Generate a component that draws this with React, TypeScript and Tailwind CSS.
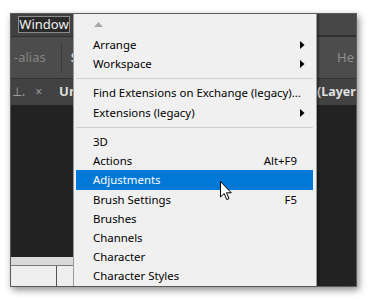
import React from "react";

const font = { fontFamily: '"Noto Sans", "Segoe UI", Arial, sans-serif' };

function SubArrow() {
  return (
    <svg width="5" height="8" viewBox="0 0 5 8" className="block">
      <path d="M0 0 L4.5 4 L0 8 Z" fill="#000" />
    </svg>
  );
}

type Item = { label: string; sub?: boolean; shortcut?: string; active?: boolean };

function Row({ item, h }: { item: Item; h: string }) {
  return (
    <div
      className={`${h} flex items-center pl-[17px] pr-[4px] ${
        item.active ? "bg-[#0078d7] text-white" : "text-[#000]"
      }`}
    >
      <span className="flex-1 whitespace-nowrap">{item.label}</span>
      {item.shortcut && <span className="mr-[12px] whitespace-nowrap">{item.shortcut}</span>}
      {item.sub && (
        <span className="mr-[4px]">
          <SubArrow />
        </span>
      )}
    </div>
  );
}

function Sep({ h }: { h: string }) {
  return (
    <div className={`${h} flex items-center`}>
      <div className="h-px w-full bg-[#cfcfcf]" />
    </div>
  );
}

function Cursor() {
  return (
    <svg width="13" height="20" viewBox="0 0 13 20" className="absolute left-[146px] top-[167px]">
      <path
        d="M0.5 0.5 L0.5 16 L4.2 12.6 L6.8 18.6 L9 17.6 L6.5 11.8 L11.3 11.8 Z"
        fill="#fff"
        stroke="#000"
        strokeWidth="1"
        strokeLinejoin="round"
      />
    </svg>
  );
}

export default function App() {
  return (
    <div className="w-[368px] h-[302px] bg-white pl-[10px] pt-[13px]" style={font}>
      <div className="relative w-[347px] h-[274px] flex flex-col bg-[#222] shadow-[2px_3px_7px_rgba(0,0,0,0.45)] border border-[#5a5a5a] overflow-hidden">
        {/* top bar */}
        <div className="h-[22px] bg-[#414141] flex items-start">
          <div className="ml-[7px] mt-[2px] h-[17px] w-[52px] bg-[#2a2a2a] border border-[#8c8c8c] text-[#f0f0f0] text-[13px] leading-[15px] flex items-center justify-center">
            Window
          </div>
          <div className="ml-auto w-[40px] h-full bg-[#474747] border-b border-[#333]" />
        </div>
        {/* toolbar */}
        <div className="h-[42px] bg-[#4c4c4c] border-t border-[#2f2f2f] flex items-center relative">
          <span className="ml-[3px] text-[#838383] text-[13px]">-alias</span>
          <div className="ml-[15px] w-px h-[30px] bg-[#3a3a3a]" />
          <span className="ml-[9px] text-[#cfcfcf] text-[13px] font-bold">S</span>
          <div className="ml-auto w-[40px] pl-[21px] whitespace-nowrap text-[#8e8e8e] text-[13px]">
            He
          </div>
        </div>
        {/* tab bar */}
        <div className="h-[27px] bg-[#424242] border-t border-[#333] flex items-center">
          <span className="ml-[1px] text-[#a8a8a8] text-[12px]">⊥.</span>
          <span className="ml-[10px] text-[#9c9c9c] text-[12px]">×</span>
          <span className="ml-[17px] text-[#dedede] text-[13px] font-bold">Un</span>
          <div className="ml-auto w-[40px] pl-[1px] overflow-hidden whitespace-nowrap text-[#e0e0e0] text-[12.5px] font-bold">
            (Layer
          </div>
        </div>
        {/* main */}
        <div className="flex-1 flex flex-row">
          <div className="w-[62px] flex flex-col">
            <div className="flex-1 bg-[#222]" />
            <div className="h-[8px] bg-[#d9d9d9]" />
            <div className="h-px bg-[#7a7a7a]" />
            <div className="h-[20px] bg-[#eeeeee] flex">
              <div className="ml-[45px] w-px bg-[#555]" />
            </div>
          </div>
          <div className="flex-1 bg-[#222]" />
        </div>

        {/* menu */}
        <div className="absolute left-[62px] top-0 w-[244px] bottom-0 bg-[#f0f0f0] border-l border-r border-[#9a9a9a] pl-[2px] pr-[3px] text-[11.4px] shadow-[2px_0_2px_rgba(0,0,0,0.35)]">
          <div className="h-[21px] flex items-center pl-[18px]">
            <svg width="9" height="5" viewBox="0 0 9 5">
              <path d="M0 5 L4.5 0 L9 5 Z" fill="#a8a8a8" />
            </svg>
          </div>
          <Row h="h-[19px]" item={{ label: "Arrange", sub: true }} />
          <Row h="h-[19px]" item={{ label: "Workspace", sub: true }} />
          <Sep h="h-[10px]" />
          <Row h="h-[20px]" item={{ label: "Find Extensions on Exchange (legacy)..." }} />
          <Row h="h-[20px]" item={{ label: "Extensions (legacy)", sub: true }} />
          <Sep h="h-[9px]" />
          <Row h="h-[19.2px]" item={{ label: "3D" }} />
          <Row h="h-[19.2px]" item={{ label: "Actions", shortcut: "Alt+F9" }} />
          <Row h="h-[19.2px]" item={{ label: "Adjustments", active: true }} />
          <Row h="h-[19.2px]" item={{ label: "Brush Settings", shortcut: "F5" }} />
          <Row h="h-[19.2px]" item={{ label: "Brushes" }} />
          <Row h="h-[19.2px]" item={{ label: "Channels" }} />
          <Row h="h-[19.2px]" item={{ label: "Character" }} />
          <Row h="h-[19.2px]" item={{ label: "Character Styles" }} />
          <Cursor />
        </div>
      </div>
    </div>
  );
}
